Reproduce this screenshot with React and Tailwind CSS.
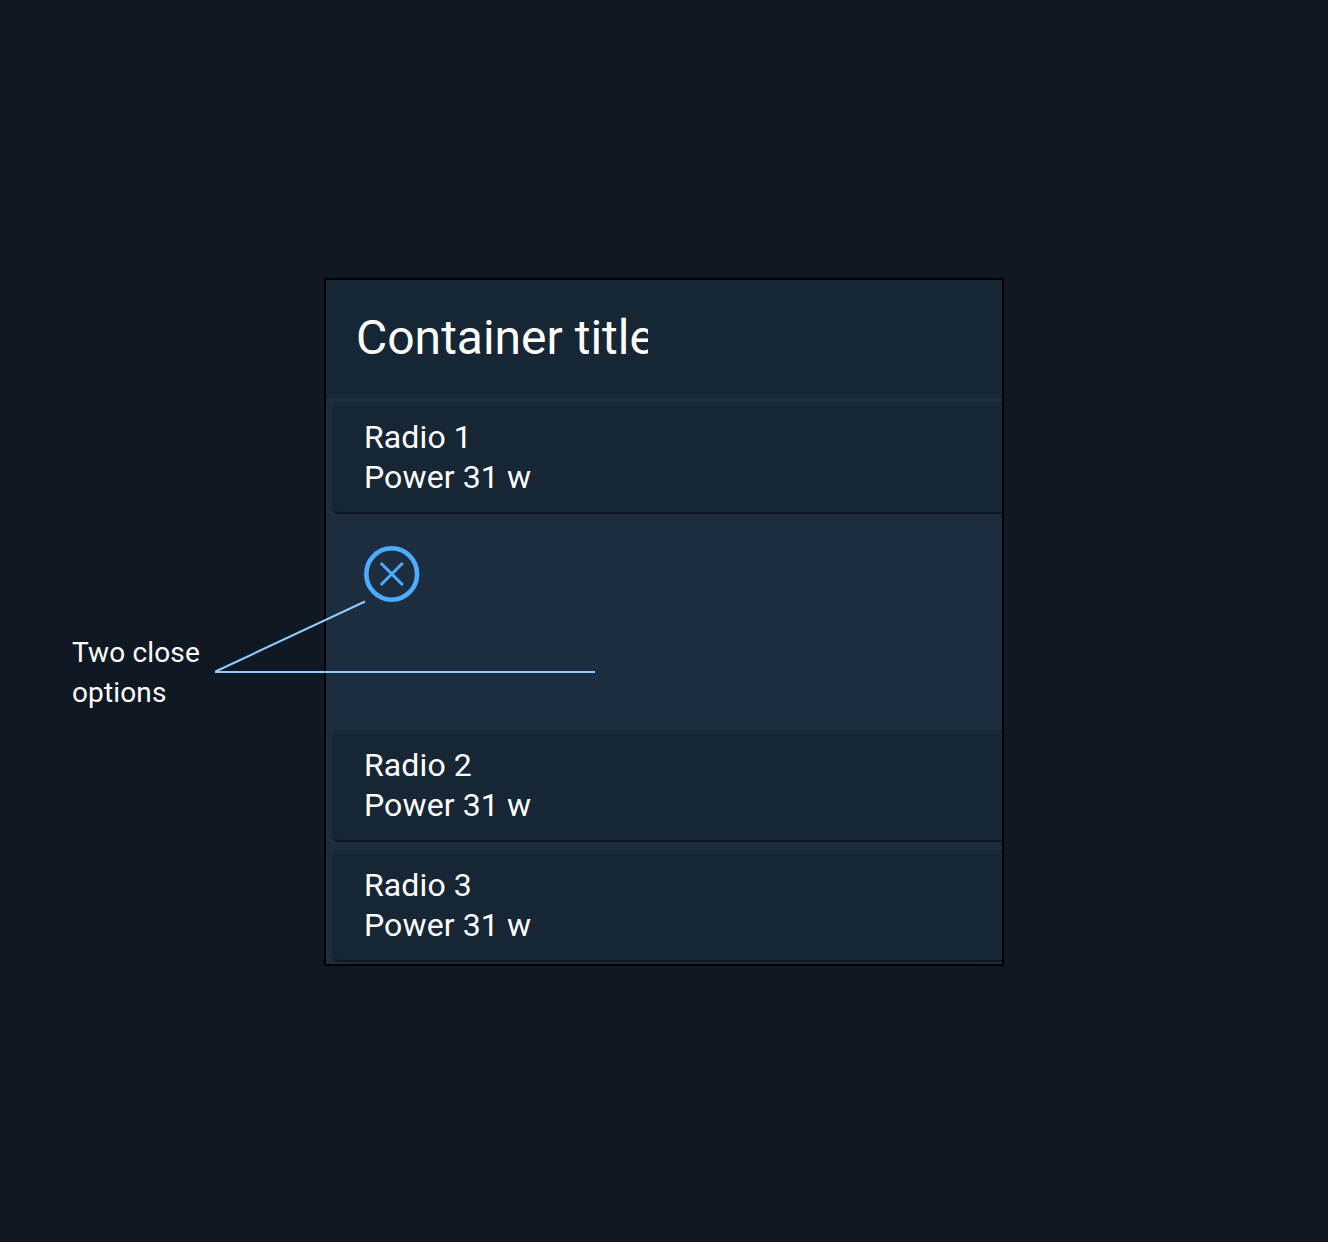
import React from "react";

function RadioRow({ name, power }) {
  return (
    <li className="h-28 rounded-l-md border-b-2 border-[#101923] bg-[#172635] pl-8 pt-[15px] text-[32px] leading-10 tracking-[0.12px]">
      <p>{name}</p>
      <p>{power}</p>
    </li>
  );
}

function CloseIcon() {
  return (
    <svg width="56" height="56" viewBox="0 0 56 56" fill="none" stroke="#4dacff">
      <ellipse cx="27.7" cy="28" rx="25.4" ry="25.7" strokeWidth="4.6" />
      <path d="M16.8 17 38.8 39M38.8 17 16.8 39" strokeWidth="3" />
    </svg>
  );
}

function Callout() {
  return (
    <svg
      className="pointer-events-none absolute left-[215px] top-[600px]"
      width="380"
      height="74"
      viewBox="0 0 380 74"
      fill="none"
      stroke="#92cbff"
      strokeWidth="2"
    >
      <path d="M150 1.5 0.5 71.5M0 72H380" />
    </svg>
  );
}

export default function App() {
  return (
    <main className="relative flex h-[1242px] w-[1328px] overflow-hidden bg-[#101923] pt-[278px] font-['Roboto',sans-serif] text-white">
      <aside className="w-[324px] shrink-0 pl-[72px] pt-[355px] text-[28px] leading-10 tracking-[0.14px]">
        <p>Two close</p>
        <p>options</p>
      </aside>
      <section className="h-[688px] w-[680px] shrink-0 overflow-hidden border-2 border-black bg-[#1c2d3f]">
        <header className="h-[118px] bg-[#172635] pl-[30px] pt-[26px]">
          <h1 className="w-[292px] overflow-hidden whitespace-nowrap text-[48px] leading-[63px]">
            Container title
          </h1>
        </header>
        <ul className="pl-1.5 pt-1">
          <RadioRow name="Radio 1" power="Power 31 w" />
          <li className="h-[216px] pl-8 pt-8">
            <button type="button" aria-label="Close" className="block">
              <CloseIcon />
            </button>
          </li>
          <RadioRow name="Radio 2" power="Power 31 w" />
          <li className="h-2" aria-hidden="true" />
          <RadioRow name="Radio 3" power="Power 31 w" />
        </ul>
      </section>
      <Callout />
    </main>
  );
}
